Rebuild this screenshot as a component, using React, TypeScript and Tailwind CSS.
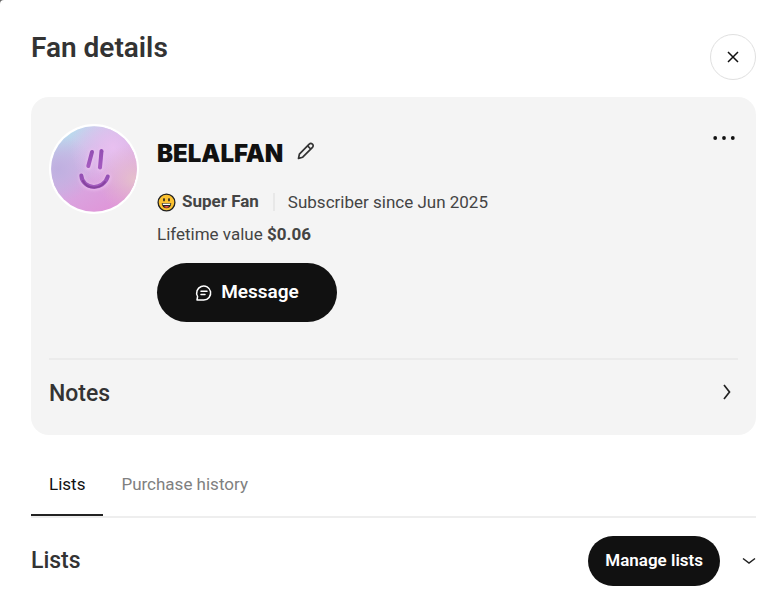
import React, { useState } from 'react';

interface FanAvatarProps {
  className?: string;
}

const FanAvatar: React.FC<FanAvatarProps> = ({ className }) => (
  <svg viewBox="0 0 90 90" className={className} role="img" aria-label="Fan avatar">
    <defs>
      <linearGradient id="base" x1="0.15" y1="0.1" x2="0.7" y2="1">
        <stop offset="0" stopColor="#b9dcee" />
        <stop offset="0.3" stopColor="#cdbbe6" />
        <stop offset="0.6" stopColor="#d9a5e0" />
        <stop offset="1" stopColor="#e095d8" />
      </linearGradient>
      <radialGradient id="pink" cx="0.72" cy="0.25" r="0.5">
        <stop offset="0" stopColor="#e8c0f0" />
        <stop offset="1" stopColor="#e8c0f0" stopOpacity="0" />
      </radialGradient>
      <radialGradient id="peach" cx="0.97" cy="0.62" r="0.42">
        <stop offset="0" stopColor="#e5c0cc" />
        <stop offset="1" stopColor="#e3b5cc" stopOpacity="0" />
      </radialGradient>
      <radialGradient id="lilac" cx="0.08" cy="0.5" r="0.4">
        <stop offset="0" stopColor="#bfafe0" />
        <stop offset="1" stopColor="#bfafe0" stopOpacity="0" />
      </radialGradient>
      <linearGradient id="stroke" x1="0" y1="0" x2="0" y2="1">
        <stop offset="0" stopColor="#9350b4" />
        <stop offset="1" stopColor="#a45abf" />
      </linearGradient>
      <filter id="glow" x="-30%" y="-30%" width="160%" height="160%">
        <feGaussianBlur stdDeviation="1.6" />
      </filter>
    </defs>
    <circle cx="45" cy="45" r="45" fill="#fff" />
    <circle cx="45" cy="45" r="42.8" fill="url(#base)" />
    <circle cx="45" cy="45" r="42.8" fill="url(#lilac)" />
    <circle cx="45" cy="45" r="42.8" fill="url(#pink)" />
    <circle cx="45" cy="45" r="42.8" fill="url(#peach)" />
    <g fill="none" strokeLinecap="round">
      <g stroke="#eec3f1" strokeWidth="6" opacity="0.7" filter="url(#glow)">
        <path d="M43 28L39.5 43" />
        <path d="M52.5 27L51 44" />
        <path d="M32.5 52C33 67 56 67 59 53" />
      </g>
      <g stroke="url(#stroke)" strokeWidth="4">
        <path d="M43 28L39.3 42" />
        <path d="M52.5 27L51 43.5" />
        <path d="M32.3 51.5C33.5 66 54.5 67 58.8 52.5" />
      </g>
      <path d="M34 57C38 65 50 66 56 58" stroke="#87449f" strokeWidth="2" />
    </g>
  </svg>
);

const PencilIcon: React.FC = () => (
  <svg width="18" height="18" viewBox="0 0 18 18" fill="none" stroke="#333" strokeWidth="1.7" strokeLinejoin="round">
    <path d="M1.5 16.4L2.4 12.2L12.2 2.2C13.2 1.1 14.4 1.2 15.4 2.1C16.4 3.1 16.5 4.3 15.5 5.3L5.7 15.2Z" />
    <path d="M10.6 3.9L13.7 7" />
  </svg>
);

const SmileIcon: React.FC = () => (
  <svg width="19" height="19" viewBox="0 0 19 19">
    <circle cx="9.5" cy="9.5" r="8.4" fill="#fcc231" stroke="#222" strokeWidth="1.3" />
    <ellipse cx="7" cy="6.7" rx="0.9" ry="1.8" fill="#222" />
    <ellipse cx="12" cy="6.7" rx="0.9" ry="1.8" fill="#222" />
    <path d="M4.7 10.2H14.3C14.1 13.2 12.3 15.2 9.5 15.2S4.9 13.2 4.7 10.2Z" fill="#222" />
    <path d="M5.8 10.7H13.2V12H5.8Z" fill="#fff" />
    <path d="M6.9 13.9C8 12.7 11 12.7 12.1 13.9C10.8 15 8.2 15 6.9 13.9Z" fill="#ee5046" />
  </svg>
);

const MessageIcon: React.FC = () => (
  <svg width="18" height="18" viewBox="0 0 18 18" fill="none" stroke="#fff" strokeWidth="1.5" strokeLinecap="round" strokeLinejoin="round">
    <path d="M2 16L2.6 12.5A7 7 0 1 1 8.8 16Z" />
    <path d="M6 7.3H12M6 10.5H10" />
  </svg>
);

const tabs = ['Lists', 'Purchase history'];

const App: React.FC = () => {
  const [activeTab, setActiveTab] = useState('Lists');

  return (
    <div className="min-h-screen bg-[#666] font-['Roboto',sans-serif] text-[#333]">
      <main className="min-h-screen rounded-tl-[4px] bg-white pt-8 pr-[23px] pb-6 pl-[31px]">
        {/* Header */}
        <header className="flex items-start justify-between">
          <h1 className="text-[28px] leading-8 font-semibold">Fan details</h1>
          <button
            type="button"
            aria-label="Close"
            className="mt-[2px] flex size-[46px] items-center justify-center rounded-full border border-[#e0e0e0]"
          >
            <svg width="12" height="12" viewBox="0 0 12 12" stroke="#111" strokeWidth="1.5">
              <path d="M1 1L11 11M11 1L1 11" />
            </svg>
          </button>
        </header>

        {/* Fan card */}
        <section className="mt-[17px] rounded-[18px] bg-[#f4f4f4] px-[18px]">
          <div className="flex items-start pt-[27px] pb-9">
            <FanAvatar className="size-[90px] shrink-0" />
            <div className="ml-[18px] grow pt-[14px]">
              <div className="flex h-8 items-center gap-[14px]">
                <h2 className="font-['Inter',sans-serif] text-2xl leading-8 font-black text-[#111]">
                  BELALFAN
                </h2>
                <button type="button" aria-label="Edit name" className="mb-[6px]">
                  <PencilIcon />
                </button>
              </div>
              <div className="mt-4 flex h-8 items-center text-[17px] text-[#444]">
                <SmileIcon />
                <strong className="ml-[6px] font-bold">Super Fan</strong>
                <span className="ml-[14px] border-l-2 border-[#e8e8e8] py-[9px] pl-[13px] leading-0">
                  Subscriber since Jun 2025
                </span>
              </div>
              <p className="text-[17px] leading-8 text-[#444]">
                Lifetime value <strong className="font-bold">$0.06</strong>
              </p>
              <button
                type="button"
                className="mt-[13px] flex h-[59px] w-[180px] items-center justify-center gap-2 rounded-full bg-[#111] text-[19px] font-semibold text-white"
              >
                <MessageIcon />
                Message
              </button>
            </div>
            <button type="button" aria-label="More options" className="mt-[10px] mr-[3px]">
              <svg width="22" height="8" viewBox="0 0 22 8" fill="#111">
                <circle cx="2.2" cy="4" r="1.9" />
                <circle cx="11" cy="4" r="1.9" />
                <circle cx="19.8" cy="4" r="1.9" />
              </svg>
            </button>
          </div>
          <button
            type="button"
            className="flex h-[77px] w-full items-center justify-between border-t-2 border-[#ebebeb] pr-[7px] pb-[6px] text-[23px] font-medium"
          >
            Notes
            <svg width="8" height="16" viewBox="0 0 8 16" fill="none" stroke="#222" strokeWidth="1.7" className="mb-[6px]">
              <path d="M1 1L6.5 8L1 15" />
            </svg>
          </button>
        </section>

        {/* Tabs */}
        <div role="tablist" className="mt-5 flex h-[63px] border-b-2 border-[#eee] text-[17px]">
          {tabs.map((tab) => (
            <button
              key={tab}
              type="button"
              role="tab"
              aria-selected={activeTab === tab}
              onClick={() => setActiveTab(tab)}
              className={
                activeTab === tab
                  ? 'border-b-2 border-[#222] px-[18px] text-[#111]'
                  : 'border-b-2 border-transparent px-[18px] text-[#808080]'
              }
            >
              {tab}
            </button>
          ))}
        </div>

        {/* Lists */}
        <section className="mt-[18px] flex items-center">
          <h2 className="grow text-[23px] leading-8 font-medium">Lists</h2>
          <button
            type="button"
            className="h-[50px] rounded-full bg-[#111] px-[17px] text-[17px] font-semibold text-white"
          >
            Manage lists
          </button>
          <button type="button" aria-label="Expand lists" className="ml-[22px]">
            <svg width="14" height="8" viewBox="0 0 14 8" fill="none" stroke="#222" strokeWidth="1.5">
              <path d="M1 1.5L7 6L13 1.5" />
            </svg>
          </button>
        </section>
      </main>
    </div>
  );
};

export default App;
